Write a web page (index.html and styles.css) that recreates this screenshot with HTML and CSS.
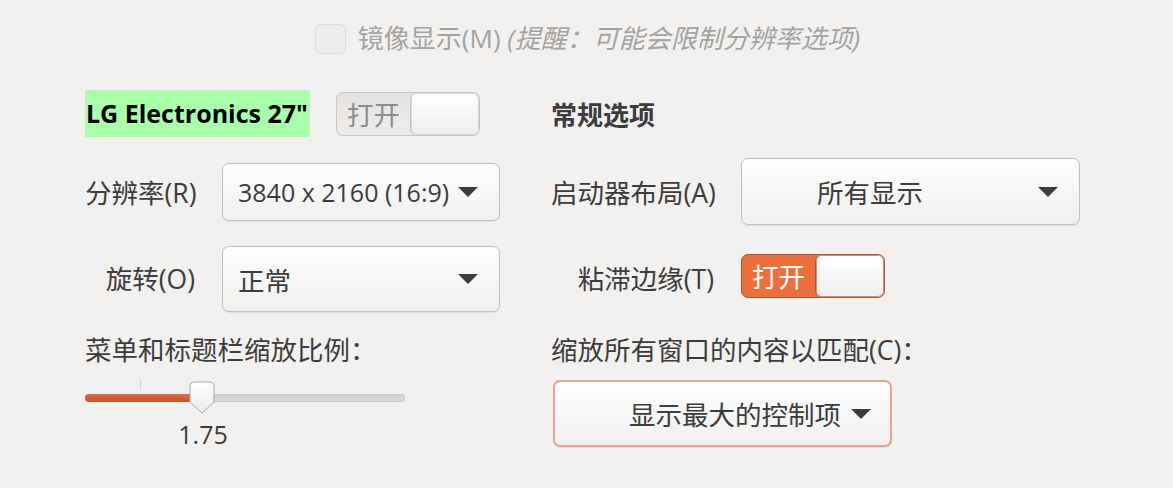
FILE: index.html
```html
<!DOCTYPE html>
<html lang="zh-CN">
<head>
<meta charset="utf-8">
<title>显示</title>
<link rel="stylesheet" href="styles.css">
</head>
<body>
<div class="page">
  <div class="mirror-row">
    <span class="checkbox"></span>
    <span class="mirror-label">镜像显示(M) <em>(提醒：可能会限制分辨率选项)</em></span>
  </div>

  <div class="grid">
    <div class="monitor cell-left">
      <span class="monitor-name">LG Electronics 27"</span>
      <div class="switch">
        <span class="switch-text">打开</span>
        <span class="switch-knob"></span>
      </div>
    </div>
    <div class="heading cell-right">常规选项</div>

    <div class="label">分辨率(R)</div>
    <div class="combo combo-res">
      <span class="combo-text lat">3840 x 2160 (16:9)</span>
      <span class="combo-arrow"></span>
    </div>
    <div class="gap"></div>
    <div class="label">启动器布局(A)</div>
    <div class="combo combo-launcher">
      <span class="combo-text">所有显示</span>
      <span class="combo-arrow"></span>
    </div>

    <div class="label">旋转(O)</div>
    <div class="combo combo-rot">
      <span class="combo-text">正常</span>
      <span class="combo-arrow"></span>
    </div>
    <div class="gap"></div>
    <div class="label">粘滞边缘(T)</div>
    <div class="cell-ctrl">
      <div class="switch switch-on">
        <span class="switch-text">打开</span>
        <span class="switch-knob"></span>
      </div>
    </div>

    <div class="sublabel cell-left">菜单和标题栏缩放比例：</div>
    <div class="sublabel cell-right">缩放所有窗口的内容以匹配(C)：</div>

    <div class="cell-left scale-wrap">
      <div class="scale">
        <div class="scale-trough"><div class="scale-fill" style="width:110px"></div></div>
        <span class="scale-tick"></span>
        <svg class="scale-knob" width="26" height="33" viewBox="0 0 26 33">
          <defs>
            <linearGradient id="kg" x1="0" y1="0" x2="0" y2="1">
              <stop offset="0" stop-color="#ffffff"/>
              <stop offset="1" stop-color="#ecebea"/>
            </linearGradient>
          </defs>
          <path d="M5 1 H21 Q25 1 25 5 V21 L13 32 L1 21 V5 Q1 1 5 1 Z" fill="url(#kg)" stroke="#aaa8a6" stroke-width="1"/>
        </svg>
      </div>
      <div class="scale-value lat">1.75</div>
    </div>
    <div class="cell-right scale-combo-cell">
      <div class="combo combo-scale focused">
        <span class="combo-text">显示最大的控制项</span>
        <span class="combo-arrow"></span>
      </div>
    </div>
  </div>
</div>
</body>
</html>
```

FILE: styles.css
```css
* { box-sizing: border-box; }

html, body {
  margin: 0;
  padding: 0;
  background: #f2f1f0;
}

body {
  font-family: "Open Sans", "Noto Sans CJK SC", sans-serif;
  font-size: 26.5px;
  color: #3c3c3c;
}

.lat {
  font-size: 25px;
}

.page {
  width: 1173px;
  height: 488px;
  padding-top: 23px;
}

.mirror-row {
  display: flex;
  align-items: center;
  justify-content: center;
  height: 31px;
  gap: 12px;
  padding-left: 2px;
}

.checkbox {
  flex: none;
  width: 31px;
  height: 30px;
  border: 1px solid #dddbd9;
  border-radius: 6px;
  background: #efeeec;
}

.mirror-label {
  color: #a4a2a0;
  font-size: 26px;
  line-height: 31px;
  white-space: nowrap;
}

.mirror-label em {
  font-style: italic;
}

.grid {
  display: grid;
  margin-top: 32px;
  margin-left: 85px;
  grid-template-columns: 137px 278px 51px 190px 339px;
  grid-template-rows: 55px 101px 71px 54px 93px;
  align-items: center;
}

.cell-left { grid-column: 1 / span 2; }
.cell-right { grid-column: 4 / span 2; }

.monitor {
  display: flex;
  align-items: center;
  gap: 26px;
}

.monitor-name {
  display: inline-block;
  background: #aaffaa;
  color: #000;
  font-weight: 700;
  font-size: 25px;
  height: 47px;
  line-height: 47px;
  padding: 0 2px 0 1px;
  white-space: nowrap;
}

.heading {
  font-weight: 700;
  font-family: "Noto Sans CJK SC", sans-serif;
  font-size: 26px;
  color: #3c3c3c;
}

.label {
  text-align: right;
  padding-right: 27px;
  white-space: nowrap;
}

.switch {
  display: flex;
  flex: none;
  width: 144px;
  height: 44px;
  border: 1px solid #c9c7c5;
  border-radius: 7px;
  background: linear-gradient(#e4e3e2, #eeedec);
  overflow: hidden;
}

.switch-text {
  flex: 1;
  padding-left: 10px;
  line-height: 42px;
  color: #8e8c8a;
  font-family: "Noto Sans CJK SC", sans-serif;
  white-space: nowrap;
}

.switch-knob {
  flex: none;
  width: 69px;
  height: 42px;
  border-left: 1px solid #c3c1bf;
  border-radius: 6px;
  background: linear-gradient(#ffffff, #efeeed);
  box-shadow: inset 0 0 0 1px #d9d7d5;
}

.switch-on {
  background: #eb703d;
  border-color: #a9553a;
  margin-bottom: 3px;
}

.switch-on .switch-text {
  color: #ffffff;
  padding-left: 10px;
}

.switch-on .switch-knob {
  border-left-color: #a9553a;
  box-shadow: inset 0 0 0 1px #c9927c;
}

.cell-ctrl {
  display: flex;
  align-items: center;
}

.combo {
  display: flex;
  align-items: center;
  border: 1px solid #c2c0be;
  border-radius: 7px;
  background: linear-gradient(#fdfdfd, #f1f0ef);
  box-shadow: 0 1px 1px rgba(0, 0, 0, 0.07);
  padding: 0 21px 0 15px;
  white-space: nowrap;
}

.combo-text {
  flex: 1;
}

.combo-arrow {
  flex: none;
  width: 0;
  height: 0;
  border-left: 10px solid transparent;
  border-right: 10px solid transparent;
  border-top: 10px solid #3c3c3c;
}

.combo-res { height: 58px; }
.combo-rot { height: 66px; margin-top: 3px; }
.combo-launcher { height: 67px; }

.combo-launcher .combo-text,
.combo-scale .combo-text {
  padding-left: 60px;
}

.scale-combo-cell {
  align-self: start;
}

.combo-scale {
  margin-left: 2px;
  width: 339px;
  height: 67px;
  margin-top: 13px;
  padding-right: 19px;
}

.focused {
  border: 2px solid #e3a68e;
  padding-left: 14px;
}

.sublabel {
  align-self: end;
  line-height: 34px;
  white-space: nowrap;
}

.scale-wrap {
  align-self: start;
}

.scale {
  position: relative;
  width: 320px;
  height: 36px;
  margin-top: 11px;
}

.scale-trough {
  position: absolute;
  left: 0;
  right: 0;
  top: 16px;
  height: 8px;
  border-radius: 4px;
  background: linear-gradient(#d1cfcd, #dedcda);
  box-shadow: inset 0 0 0 1px #cac8c6;
  overflow: hidden;
}

.scale-fill {
  height: 100%;
  background: linear-gradient(#e56a3c, #c8532d);
}

.scale-tick {
  position: absolute;
  left: 55px;
  top: 2px;
  width: 1px;
  height: 9px;
  background: #cfcdcb;
}

.scale-knob {
  position: absolute;
  left: 104px;
  top: 3px;
}

.scale-value {
  width: 236px;
  text-align: center;
  margin-top: 4px;
  line-height: 32px;
}
```
